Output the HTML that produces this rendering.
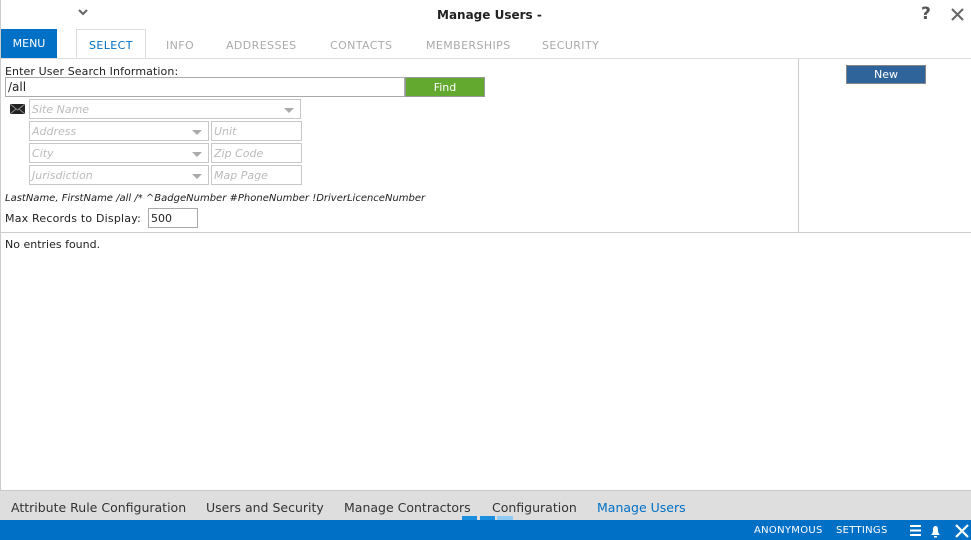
<!DOCTYPE html>
<html><head><style>
*{margin:0;padding:0;box-sizing:border-box}
body{width:971px;height:540px;overflow:hidden;background:#fff;font-family:"DejaVu Sans","Liberation Sans",sans-serif;position:relative;color:#222}
.a{position:absolute}
.tab{position:absolute;top:39px;font-size:11px;color:#aaa;letter-spacing:.4px}
.f{position:absolute;height:20px;border:1px solid #c8c8c8;font-size:11px;font-style:italic;color:#bbb;padding:3px 2px;background:#fff}
.dd::after{content:"";position:absolute;right:6px;top:8px;border-left:5px solid transparent;border-right:5px solid transparent;border-top:5px solid #aaa}
.bt{position:absolute;top:500px;font-size:12.5px;color:#333}
</style></head><body>
<div class="a" style="left:0;top:0;width:1px;height:520px;background:#ccc"></div>
<svg class="a" style="left:78px;top:9px" width="10" height="7"><path d="M1 1l4 4 4-4" stroke="#666" stroke-width="2" fill="none"/></svg>
<div class="a" style="left:437px;top:8px;font-size:12px;font-weight:bold;color:#222">Manage Users -</div>
<div class="a" style="left:921px;top:4px;font-size:17px;font-weight:bold;color:#555">?</div>
<svg class="a" style="left:951px;top:8px" width="13" height="13"><path d="M1 1l11 11M12 1L1 12" stroke="#666" stroke-width="2"/></svg>
<div class="a" style="left:1px;top:29px;width:56px;height:29px;background:#0070c6;color:#fff;font-size:11px;text-align:center;line-height:30px">MENU</div>
<div class="a" style="left:76px;top:29px;width:70px;height:30px;border:1px solid #ddd;border-bottom:none;background:#fff"></div>
<div class="tab" style="left:89px;color:#0070c6">SELECT</div>
<div class="tab" style="left:166px">INFO</div>
<div class="tab" style="left:226px">ADDRESSES</div>
<div class="tab" style="left:330px">CONTACTS</div>
<div class="tab" style="left:426px">MEMBERSHIPS</div>
<div class="tab" style="left:542px">SECURITY</div>
<div class="a" style="left:1px;top:58px;width:970px;height:1px;background:#ddd"></div>
<div class="a" style="left:798px;top:59px;width:1px;height:173px;background:#ccc"></div>
<div class="a" style="left:1px;top:232px;width:970px;height:1px;background:#ccc"></div>
<div class="a" style="left:5px;top:65px;font-size:11px;letter-spacing:.1px">Enter User Search Information:</div>
<div class="a" style="left:5px;top:77px;width:400px;height:20px;border:1px solid #aaa;font-size:12px;padding:2px 2px">/all</div>
<div class="a" style="left:405px;top:77px;width:80px;height:20px;background:#63a82f;border:1px solid #999;color:#fff;font-size:11px;text-align:center;line-height:19px">Find</div>
<svg class="a" style="left:10px;top:104px" width="15" height="10"><rect width="15" height="10" fill="#222"/><path d="M0 0L7.5 6L15 0M0 10L6 5M15 10L9 5" stroke="#888" fill="none"/></svg>
<div class="f dd" style="left:29px;top:99px;width:272px">Site Name</div>
<div class="f dd" style="left:29px;top:121px;width:180px">Address</div>
<div class="f" style="left:211px;top:121px;width:91px">Unit</div>
<div class="f dd" style="left:29px;top:143px;width:180px">City</div>
<div class="f" style="left:211px;top:143px;width:91px">Zip Code</div>
<div class="f dd" style="left:29px;top:165px;width:180px">Jurisdiction</div>
<div class="f" style="left:211px;top:165px;width:91px">Map Page</div>
<div class="a" style="left:5px;top:193px;font-size:10px;font-style:italic">LastName, FirstName /all /* ^BadgeNumber #PhoneNumber !DriverLicenceNumber</div>
<div class="a" style="left:5px;top:212px;font-size:11px;letter-spacing:.2px">Max Records to Display:</div>
<div class="a" style="left:148px;top:208px;width:50px;height:20px;border:1px solid #aaa;font-size:11px;padding:3px 2px">500</div>
<div class="a" style="left:846px;top:65px;width:80px;height:19px;background:#2f649a;border:1px solid #888;color:#fff;font-size:11px;text-align:center;line-height:18px">New</div>
<div class="a" style="left:5px;top:238px;font-size:11px">No entries found.</div>
<div class="a" style="left:0;top:490px;width:971px;height:30px;background:#dedede;border-top:1px solid #c8c8c8"></div>
<div class="bt" style="left:11px">Attribute Rule Configuration</div>
<div class="bt" style="left:206px">Users and Security</div>
<div class="bt" style="left:344px">Manage Contractors</div>
<div class="bt" style="left:492px">Configuration</div>
<div class="bt" style="left:597px;color:#0070c6">Manage Users</div>
<div class="a" style="left:462px;top:516px;width:15px;height:4px;background:#1a8fe0"></div>
<div class="a" style="left:480px;top:516px;width:15px;height:4px;background:#1a8fe0"></div>
<div class="a" style="left:497px;top:516px;width:16px;height:4px;background:#8ecbf5"></div>
<div class="a" style="left:0;top:520px;width:971px;height:20px;background:#0070c6"></div>
<div class="a" style="left:754px;top:525px;font-size:10px;color:#fff;letter-spacing:.3px">ANONYMOUS</div>
<div class="a" style="left:836px;top:525px;font-size:10px;color:#fff;letter-spacing:.3px">SETTINGS</div>
<svg class="a" style="left:909px;top:524px" width="62" height="14"><path d="M1 2h11M1 6.5h11M1 11h11" stroke="#fff" stroke-width="2"/><path d="M31 11h-9c1-1 2-2 2-5s1-4 2.5-4 2.5 1 2.5 4 1 4 2 5zM25 12h3v1.5h-3z" fill="#fff"/><path d="M47 1l12 12M59 1l-12 12" stroke="#fff" stroke-width="2.2"/></svg>
</body></html>
